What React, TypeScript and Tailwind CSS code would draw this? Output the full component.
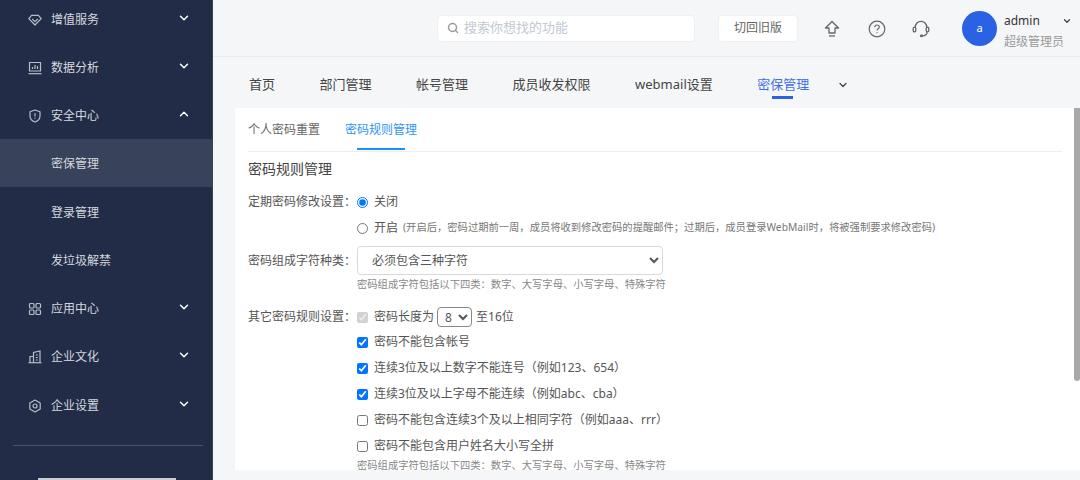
import type { ReactNode } from 'react';
import { ChevronDown, ChevronUp, Search } from 'lucide-react';

const FONT = '[font-family:"Noto_Sans","Noto_Sans_CJK_SC",sans-serif]';

function Diamond() {
  return (
    <svg viewBox="0 0 14 14" className="h-3.5 w-3.5" fill="none" stroke="currentColor" strokeWidth="1.2" strokeLinejoin="round">
      <path d="M3.6 2.4h6.8l2.8 3.3L7 12 .8 5.700z" />
      <path d="M4.200 6l2.800 2.600L9.800 6" />
    </svg>
  );
}

function Monitor() {
  return (
    <svg viewBox="0 0 14 14" className="h-3.5 w-3.5" fill="none" stroke="currentColor" strokeWidth="1.2">
      <path d="M1.500 1.500h11v8.500h-11z" />
      <path d="M.5 12.700h13" />
      <path d="M4.500 8V6M7 8V4M9.500 8V5" />
    </svg>
  );
}

function Shield() {
  return (
    <svg viewBox="0 0 14 14" className="h-3.5 w-3.5" fill="none" stroke="currentColor" strokeWidth="1.2" strokeLinejoin="round">
      <path d="M7 1l5 1.700v4.200c0 3-2.200 5-5 6.100-2.800-1.100-5-3.100-5-6.100V2.700z" />
      <path d="M7 4.200v3.300M7 8.800v1" />
    </svg>
  );
}

function Grid() {
  return (
    <svg viewBox="0 0 14 14" className="h-3.5 w-3.5" fill="none" stroke="currentColor" strokeWidth="1.2">
      <rect x="1.500" y="1.500" width="4.500" height="4.500" rx="1" />
      <rect x="8" y="1.500" width="4.500" height="4.500" rx="1" />
      <rect x="1.500" y="8" width="4.500" height="4.500" rx="1" />
      <rect x="8" y="8" width="4.500" height="4.500" rx="1" />
    </svg>
  );
}

function Building() {
  return (
    <svg viewBox="0 0 14 14" className="h-3.5 w-3.5" fill="none" stroke="currentColor" strokeWidth="1.2">
      <path d="M5.500 12.500V2.500l6.500-1.500v11.500" />
      <path d="M2 12.500V6.500h3.500" />
      <path d="M.5 12.700h13" />
      <path d="M7.800 5h2M7.800 7.500h2M7.800 10h2" />
    </svg>
  );
}

function Hexagon() {
  return (
    <svg viewBox="0 0 14 14" className="h-3.5 w-3.5" fill="none" stroke="currentColor" strokeWidth="1.2" strokeLinejoin="round">
      <path d="M7 1l5.200 3v6L7 13l-5.200-3V4z" />
      <circle cx="7" cy="7" r="2" />
    </svg>
  );
}

function Upload() {
  return (
    <svg viewBox="0 0 16 18" className="h-[18px] w-4" fill="none" stroke="#666" strokeWidth="1.300" strokeLinejoin="round">
      <path d="M8 1.500L14.500 8h-3.500v5H5V8H1.500z" />
      <path d="M5 16h6" />
    </svg>
  );
}

function Help() {
  return (
    <svg viewBox="0 0 18 18" className="h-[18px] w-[18px]" fill="none" stroke="#666" strokeWidth="1.200">
      <circle cx="9" cy="9" r="7.800" />
      <path d="M6.700 7.200c0-1.400 1-2.200 2.300-2.200s2.300.8 2.300 2c0 1.700-2.300 1.800-2.300 3.600" />
      <path d="M9 12.200v1.100" />
    </svg>
  );
}

function Headset() {
  return (
    <svg viewBox="0 0 18 18" className="h-[18px] w-[18px]" fill="none" stroke="#666" strokeWidth="1.300">
      <path d="M3.300 7.500V7a5.700 5.700 0 0 1 11.400 0v.5" />
      <rect x="1.200" y="7.200" width="2.600" height="4.600" rx="1.300" />
      <rect x="14.200" y="7.200" width="2.600" height="4.600" rx="1.300" />
      <path d="M15 12c0 2.500-2 3.800-4.500 3.800" />
      <circle cx="9.500" cy="15.800" r=".9" fill="#666" />
    </svg>
  );
}

const menuTop = [
  { label: '增值服务', icon: <Diamond /> },
  { label: '数据分析', icon: <Monitor /> },
];

const subMenu = ['密保管理', '登录管理', '发垃圾解禁'];

const menuBottom = [
  { label: '应用中心', icon: <Grid /> },
  { label: '企业文化', icon: <Building /> },
  { label: '企业设置', icon: <Hexagon /> },
];

const tabs = ['首页', '部门管理', '帐号管理', '成员收发权限', 'webmail设置'];

const rules = [
  { label: '密码不能包含帐号', checked: true },
  { label: '连续3位及以上数字不能连号（例如123、654）', checked: true },
  { label: '连续3位及以上字母不能连续（例如abc、cba）', checked: true },
  { label: '密码不能包含连续3个及以上相同字符（例如aaa、rrr）', checked: false },
  { label: '密码不能包含用户姓名大小写全拼', checked: false },
];

function MenuRow({ label, icon, open }: { label: string; icon: ReactNode; open?: boolean }) {
  return (
    <div className="flex h-[48.25px] items-center pl-[28px] pr-[21px] pt-[3px] text-[12px] text-[#d5d8df]">
      <span className="w-[23px] text-[#b9bdc8]">{icon}</span>
      <span className="flex-1">{label}</span>
      {open ? (
        <ChevronUp className="mb-[4px] h-3.5 w-3.5 text-white" strokeWidth={2.5} />
      ) : (
        <ChevronDown className="mb-[4px] h-3.5 w-3.5 text-white" strokeWidth={2.5} />
      )}
    </div>
  );
}

function Sidebar() {
  return (
    <aside className="flex h-full w-[213px] shrink-0 flex-col overflow-hidden border-r border-[#3a4257] bg-[#222c47]">
      <div className="-mt-[6px]">
        {menuTop.map((m) => <MenuRow key={m.label} {...m} />)}
        <MenuRow label="安全中心" icon={<Shield />} open />
        {subMenu.map((s, i) => (
          <div key={s} className={`flex h-[48.25px] items-center pl-[51px] pt-[3px] text-[12px] text-[#d5d8df] ${i === 0 ? 'bg-[#38425a]' : ''}`}>{s}</div>
        ))}
        {menuBottom.map((m) => <MenuRow key={m.label} {...m} />)}
      </div>
      <div className="ml-[13px] mr-[9px] mt-[17px] h-px shrink-0 bg-[#4a5368]" />
      <div className="ml-[38px] mr-[36px] mt-[32px] h-[2px] shrink-0 bg-[#c9ccd3]" />
    </aside>
  );
}

function Header() {
  return (
    <header className="flex h-[57px] shrink-0 items-center border-b border-[#e8eaed] pl-[224px]">
      <div className="flex h-[27px] w-[258px] shrink-0 items-center gap-[5px] rounded border border-[#eef0f3] bg-white px-[9px] text-[13px] text-[#c3c8d2]">
        <Search className="h-3 w-3 text-[#9a9a9a]" strokeWidth={3} />
        搜索你想找的功能
      </div>
      <div className="ml-[23px] flex h-[27px] w-[80px] shrink-0 items-center justify-center rounded border border-[#eef0f3] bg-white text-[12px] text-[#666]">切回旧版</div>
      <div className="ml-[26px] mt-[2px] w-[16px] shrink-0"><Upload /></div>
      <div className="ml-[28px] mt-[2px] shrink-0"><Help /></div>
      <div className="ml-[26px] mt-[2px] shrink-0"><Headset /></div>
      <div className="ml-[32px] mt-[1px] flex h-[35px] w-[35px] shrink-0 items-center justify-center rounded-full bg-[#2b62e3] text-[11px] text-white">a</div>
      <div className="ml-[7px] flex shrink-0 flex-col pt-[7px]">
        <div className="flex w-[68px] items-center justify-between text-[12px] leading-[20px] text-[#333]">
          admin
          <ChevronDown className="h-2.5 w-2.5 text-[#444]" strokeWidth={3} />
        </div>
        <div className="mt-[1px] text-[12px] leading-[20px] text-[#999]">超级管理员</div>
      </div>
    </header>
  );
}

function TabBar() {
  return (
    <div className="flex h-[51px] shrink-0 items-center pl-[36px] pt-[4px] text-[13px] text-[#444]">
      {tabs.map((t) => <span key={t} className="mr-[44.5px]">{t}</span>)}
      <span className="relative text-[#3f6ee8]">
        密保管理
        <span className="absolute left-[15px] top-[21px] h-[3px] w-[21px] bg-[#2b62e3]" />
      </span>
      <ChevronDown className="ml-[28px] h-3 w-3 text-[#444]" strokeWidth={2.5} />
    </div>
  );
}

function Card() {
  return (
    <div className="relative flex min-h-0 flex-1">
      <main className="ml-[22px] h-[362px] flex-1 bg-white pl-[13px] pr-[18px] text-[12px] text-[#555]">
        <div className="flex h-[44px] items-center border-b border-[#eeeeee]">
          <span className="text-[#666]">个人密码重置</span>
          <span className="relative ml-[25px] text-[#2f95f5]">
            密码规则管理
            <span className="absolute left-[12px] top-[27px] h-[2px] w-[48px] bg-[#1890ff]" />
          </span>
        </div>
        <h2 className="mt-[7px] text-[14px] font-normal leading-[20px] text-[#444]">密码规则管理</h2>
        <div className="mt-[14px] flex h-[18px] items-center">
          <span className="w-[109px] shrink-0 whitespace-nowrap">定期密码修改设置：</span>
          <input type="radio" name="cycle" defaultChecked className="m-0 h-[11px] w-[11px] accent-[#0075ff]" />
          <span className="ml-[6px]">关闭</span>
        </div>
        <div className="mt-[8px] flex h-[18px] items-center pl-[109px]">
          <input type="radio" name="cycle" className="m-0 h-[11px] w-[11px]" />
          <span className="ml-[6px]">开启</span>
          <span className="ml-[5px] whitespace-nowrap text-[10.3px] text-[#777]">(开启后，密码过期前一周，成员将收到修改密码的提醒邮件；过期后，成员登录WebMail时，将被强制要求修改密码)</span>
        </div>
        <div className="mt-[9px] flex items-center">
          <span className="w-[109px] shrink-0 whitespace-nowrap">密码组成字符种类：</span>
          <select className="h-[29px] w-[306px] rounded border border-[#d9d9d9] bg-white px-[10px] text-[12px] text-[#555]">
            <option>必须包含三种字符</option>
          </select>
        </div>
        <p className="mt-[2px] pl-[109px] text-[10.3px] leading-[14px] text-[#888]">密码组成字符包括以下四类：数字、大写字母、小写字母、特殊字符</p>
        <div className="mt-[16px] flex h-[20px] items-center">
          <span className="w-[109px] shrink-0 whitespace-nowrap">其它密码规则设置：</span>
          <input type="checkbox" disabled defaultChecked className="m-0 h-[11px] w-[11px]" />
          <span className="ml-[6px]">密码长度为</span>
          <select className="ml-[3px] mr-[4px] h-[20px] w-[35px] rounded-sm border border-[#888] bg-white pl-[3px] text-[12px]">
            <option>8</option>
          </select>
          <span>至16位</span>
        </div>
        <div className="-mt-[2px] pl-[109px]">
          {rules.map((r) => (
            <label key={r.label} className="mt-[8px] flex h-[18px] items-center">
              <input type="checkbox" defaultChecked={r.checked} className="m-0 h-[11px] w-[11px] accent-[#0075ff]" />
              <span className="ml-[6px]">{r.label}</span>
            </label>
          ))}
          <p className="mt-[5px] text-[10.3px] leading-[10px] text-[#888]">密码组成字符包括以下四类：数字、大写字母、小写字母、特殊字符</p>
        </div>
      </main>
      <div className="absolute right-0 top-0 h-[273px] w-[6px] rounded-b-sm bg-[#a8a8a8]" />
    </div>
  );
}

export default function App() {
  return (
    <div className={`flex h-[480px] w-[1080px] overflow-hidden bg-[#f5f6f8] ${FONT}`}>
      <Sidebar />
      <div className="flex min-w-0 flex-1 flex-col">
        <Header />
        <TabBar />
        <Card />
      </div>
    </div>
  );
}
